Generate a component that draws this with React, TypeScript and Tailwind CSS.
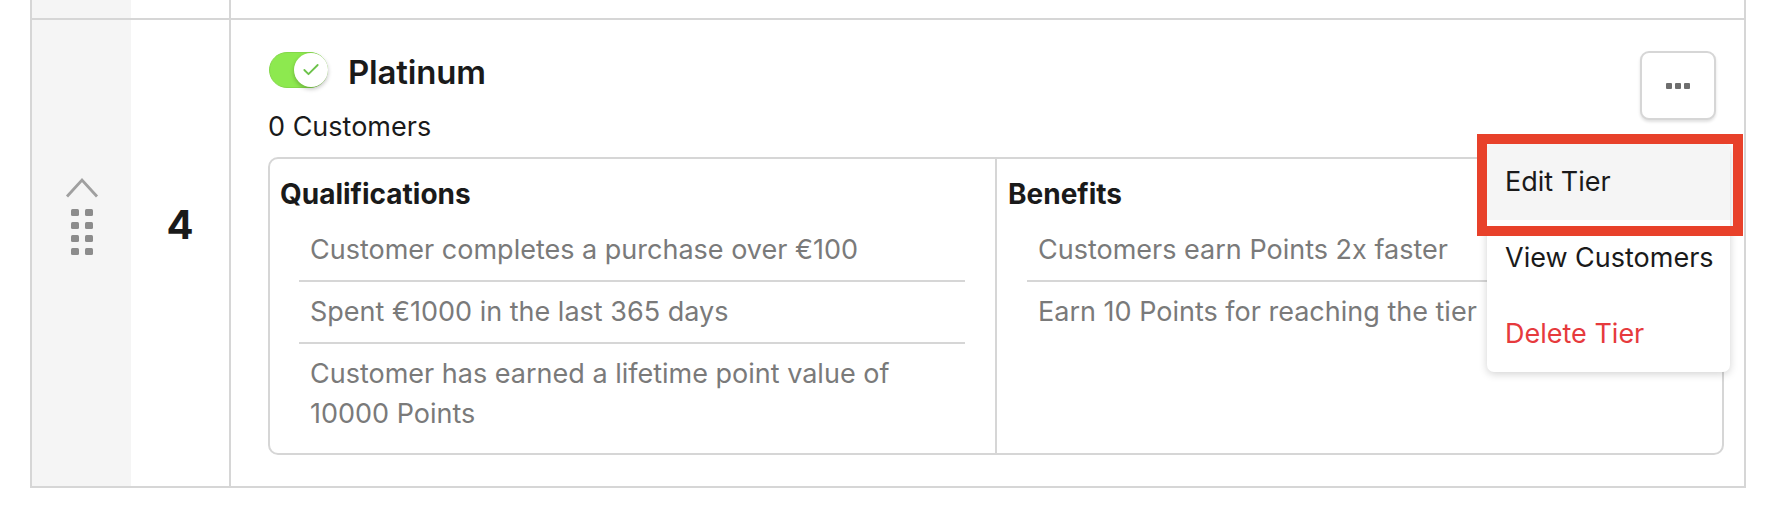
import { Check } from "lucide-react"

const qualifications = [
  "Customer completes a purchase over €100",
  "Spent €1000 in the last 365 days",
  "Customer has earned a lifetime point value of 10000 Points",
]

const benefits = ["Customers earn Points 2x faster", "Earn 10 Points for reaching the tier"]

const TierList = ({ title, items, first }: { title: string; items: string[]; first?: boolean }) => (
  <div
    className={
      first
        ? "w-[727px] border-r-2 border-[#d6d6d6] pl-[10px] pr-[10px] pt-[17px]"
        : "flex-1 pl-[11px] pr-[10px] pt-[17px]"
    }
  >
    <h3 className="text-[28px] leading-[36px] font-bold text-[#1a1a1a]">{title}</h3>
    <ul className={first ? "mt-[8px] ml-[19px] mr-[20px]" : "mt-[8px] ml-[19px]"}>
      {items.map((item, i) => (
        <li
          key={item}
          className={
            i < items.length - 1
              ? "border-b-2 border-[#d6d6d6] pl-[11px] pr-[10px] py-[10px] text-[27px] leading-[40px] text-[#7a7a7a]"
              : "pl-[11px] pr-[10px] py-[10px] text-[27px] leading-[40px] text-[#7a7a7a]"
          }
        >
          {item}
        </li>
      ))}
    </ul>
  </div>
)

const App = () => {
  return (
    <div className="w-[1778px] h-[515px] bg-white font-['Inter','Noto_Sans',sans-serif] text-[#1a1a1a]">
      <div className="ml-[30px] w-[1716px] border-x-2 border-b-2 border-[#d6d6d6]">
        {/* previous row */}
        <div className="flex h-[20px] border-b-2 border-[#d6d6d6]">
          <div className="w-[99px] bg-[#f5f5f5]" />
          <div className="w-[100px] border-r-2 border-[#d6d6d6]" />
          <div className="flex-1" />
        </div>

        {/* tier row */}
        <div className="flex h-[466px]">
          <div className="w-[99px] bg-[#f5f5f5] flex flex-col items-center pt-[157px]">
            <svg width="34" height="21" viewBox="0 0 34 21" fill="none">
              <polyline points="2,19.5 17,3 32,19.5" stroke="#a0a0a0" strokeWidth="2.8" />
            </svg>
            <div className="mt-[11px] grid grid-cols-2 gap-x-[6px] gap-y-[6px]">
              {Array.from({ length: 8 }).map((_, i) => (
                <div key={i} className="w-[8px] h-[7px] rounded-[1.5px] bg-[#8c8c8c]" />
              ))}
            </div>
          </div>
          <div className="w-[100px] border-r-2 border-[#d6d6d6] flex justify-center pt-[181px]">
            <span className="text-[40px] leading-[48px] font-bold">4</span>
          </div>

          <div className="flex-1 pl-[37px] pr-[20px] pt-[32px]">
            <div className="flex items-start justify-between">
              <div>
                <div className="flex items-center gap-[20px] h-[36px] ml-[1px]">
                  <div className="relative w-[59px] h-[36px] rounded-full bg-[#8de94f] border border-[#84d84a]">
                    <div className="absolute right-[-1px] top-[0px] w-[34px] h-[34px] rounded-full bg-white shadow-[0_2px_4px_rgba(0,0,0,0.25)] flex items-center justify-center">
                      <Check size={20} strokeWidth={2.2} color="#6cc24a" />
                    </div>
                  </div>
                  <h2 className="mt-[4px] text-[33px] leading-[36px] font-semibold tracking-[-0.2px]">Platinum</h2>
                </div>
                <p className="mt-[21px] text-[27px] leading-[36px]">0 Customers</p>
              </div>

              <div className="relative mr-[8px] mt-[-1px]">
                <button className="w-[76px] h-[69px] rounded-[9px] border-2 border-[#d6d6d6] bg-white shadow-[0_2px_3px_rgba(0,0,0,0.12)] flex items-center justify-center gap-[3px]">
                  <span className="w-[6px] h-[6px] rounded-[1px] bg-[#6e6e6e]" />
                  <span className="w-[6px] h-[6px] rounded-[1px] bg-[#6e6e6e]" />
                  <span className="w-[6px] h-[6px] rounded-[1px] bg-[#6e6e6e]" />
                </button>

                {/* dropdown menu */}
                <div className="absolute z-10 top-[93px] right-[-14px] w-[243px] rounded-[7px] bg-white shadow-[0_2px_8px_rgba(0,0,0,0.18)] overflow-hidden text-[27px] leading-[36px] whitespace-nowrap">
                  <div className="h-[76px] flex items-center pl-[18px] bg-[#f5f5f5]">Edit Tier</div>
                  <div className="h-[76px] flex items-center pl-[18px]">View Customers</div>
                  <div className="h-[76px] flex items-center pl-[18px] text-[#e63a3d]">Delete Tier</div>
                </div>
                {/* highlight */}
                <div className="absolute z-20 top-[83px] right-[-27px] w-[266px] h-[102px] border-[10px] border-[#e8412a]" />
              </div>
            </div>

            <div className="mt-[12px] h-[298px] border-2 border-[#d6d6d6] rounded-[10px] flex">
              <TierList title="Qualifications" items={qualifications} first />
              <TierList title="Benefits" items={benefits} />
            </div>
          </div>
        </div>
      </div>
    </div>
  )
}

export default App
